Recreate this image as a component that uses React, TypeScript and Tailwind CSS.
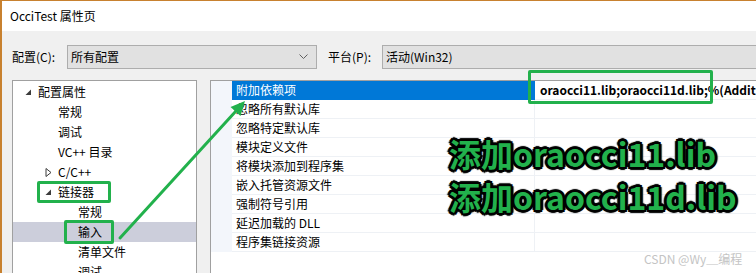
import React from 'react';

const FONT = { fontFamily: '"Noto Sans CJK SC", "Noto Sans", sans-serif' };

const treeItems = [
  { label: '配置属性', level: 0, toggle: 'open' },
  { label: '常规', level: 1 },
  { label: '调试', level: 1 },
  { label: 'VC++ 目录', level: 1 },
  { label: 'C/C++', level: 1, toggle: 'closed' },
  { label: '链接器', level: 1, toggle: 'open' },
  { label: '常规', level: 2 },
  { label: '输入', level: 2, selected: true },
  { label: '清单文件', level: 2 },
  { label: '调试', level: 2 },
];

const props = [
  '附加依赖项',
  '忽略所有默认库',
  '忽略特定默认库',
  '模块定义文件',
  '将模块添加到程序集',
  '嵌入托管资源文件',
  '强制符号引用',
  '延迟加载的 DLL',
  '程序集链接资源',
];

const indent = ['pl-[12px]', 'pl-[32px]', 'pl-[52px]'];

const Toggle = ({ kind }: { kind?: string }) => {
  if (kind === 'open')
    return (
      <svg width="7" height="7" viewBox="0 0 7 7" className="mr-[6px] shrink-0">
        <polygon points="6,0.5 6,6 0.5,6" fill="#3c3c3c" />
      </svg>
    );
  if (kind === 'closed')
    return (
      <svg width="7" height="9" viewBox="0 0 7 9" className="mr-[6px] shrink-0">
        <polygon points="1,0.5 6,4.5 1,8.5" fill="none" stroke="#3c3c3c" strokeWidth="1" />
      </svg>
    );
  return <span className="w-[7px] mr-[6px] shrink-0" />;
};

const Combo = ({ text, className }: { text: string; className: string }) => (
  <div className={`h-[24px] bg-[#e1e1e1] border border-[#adadad] flex items-center pl-[3px] pr-[8px] ${className}`}>
    <span className="flex-1 text-[12px] text-black">{text}</span>
    <svg width="9" height="6" viewBox="0 0 9 6">
      <polyline points="0.5,0.5 4.5,4.5 8.5,0.5" fill="none" stroke="#606060" strokeWidth="1" />
    </svg>
  </div>
);

export default function App() {
  return (
    <div
      className="relative w-[756px] h-[273px] overflow-hidden bg-[#f0f0f0] border-l-2 border-t border-[#c8812f] flex flex-col text-black"
      style={FONT}
    >
      {/* Title bar */}
      <div className="h-[30px] bg-white flex items-center pl-[8px] text-[12px] leading-none">OcciTest 属性页</div>

      {/* Config row */}
      <div className="h-[49px] flex pt-[14px] pl-[10px] text-[12px]">
        <div className="h-[24px] flex items-center w-[55px] shrink-0">配置(C):</div>
        <Combo text="所有配置" className="w-[250px] shrink-0" />
        <div className="h-[24px] flex items-center pl-[11px] w-[65px] shrink-0">平台(P):</div>
        <Combo text="活动(Win32)" className="w-[400px] shrink-0" />
      </div>

      {/* Main area */}
      <div className="flex-1 flex pl-[10px] gap-[13px] min-h-0">
        <div className="w-[185px] shrink-0 bg-white border-l border-t border-r border-[#a0a0a0] pt-[1px] text-[12px]">
          {treeItems.map((it, i) => (
            <div
              key={i}
              className={`h-[20px] flex items-center whitespace-nowrap ${indent[it.level]} ${it.selected ? 'bg-[#cccedb]' : ''}`}
            >
              <Toggle kind={it.toggle} />
              <span>{it.label}</span>
            </div>
          ))}
        </div>

        <div className="w-[600px] shrink-0 bg-white border-l border-t border-[#a0a0a0] text-[12px]">
          {props.map((p, i) => (
            <div key={i} className="h-[19px] flex">
              <div className="w-[21px] shrink-0 bg-[#f3f6fb]" />
              <div
                className={`w-[303px] shrink-0 flex items-center pl-[4px] whitespace-nowrap border-b border-r ${
                  i === 0 ? 'bg-[#0078d7] text-white border-[#0078d7]' : 'border-[#eef1f5]'
                }`}
              >
                {p}
              </div>
              <div className="flex-1 min-w-0 flex items-center pl-[5px] border-b border-[#eef1f5] font-bold whitespace-nowrap overflow-hidden">
                {i === 0 ? 'oraocci11.lib;oraocci11d.lib;%(AdditionalDependencies)' : ''}
              </div>
            </div>
          ))}
        </div>
      </div>

      {/* Annotations */}
      <div className="absolute left-[35px] top-[180px] w-[74px] h-[22px] border-[3px] border-[#22b14c] rounded-[2px]" />
      <div className="absolute left-[62px] top-[219px] w-[50px] h-[24px] border-[3px] border-[#22b14c] rounded-[2px]" />
      <div className="absolute left-[526px] top-[69px] w-[185px] h-[34px] border-[3px] border-[#22b14c] rounded-[2px]" />

      <svg className="absolute left-0 top-0" width="756" height="273" viewBox="0 0 756 273">
        <line x1="118" y1="237" x2="234" y2="110" stroke="#22b14c" strokeWidth="3" strokeLinecap="round" />
        <polygon points="243,100 238.5,115 228.5,106" fill="#22b14c" />
      </svg>

      <div
        className="absolute left-[447px] top-[131px] text-[32px] leading-[43px] font-bold text-[#22b14c] whitespace-nowrap [text-shadow:2px_0_0_#000,-2px_0_0_#000,0_2px_0_#000,0_-2px_0_#000,2px_2px_0_#000,-2px_-2px_0_#000,2px_-2px_0_#000,-2px_2px_0_#000,3px_0_1px_#000,-3px_0_1px_#000,0_3px_1px_#000,0_-3px_1px_#000]"
      >
        <div>添加oraocci11.lib</div>
        <div>添加oraocci11d.lib</div>
      </div>

      <div className="absolute left-[642px] top-[250px] text-[12px] leading-[16px] text-[#c4c4c4] whitespace-nowrap">
        CSDN @Wy＿编程
      </div>
    </div>
  );
}
